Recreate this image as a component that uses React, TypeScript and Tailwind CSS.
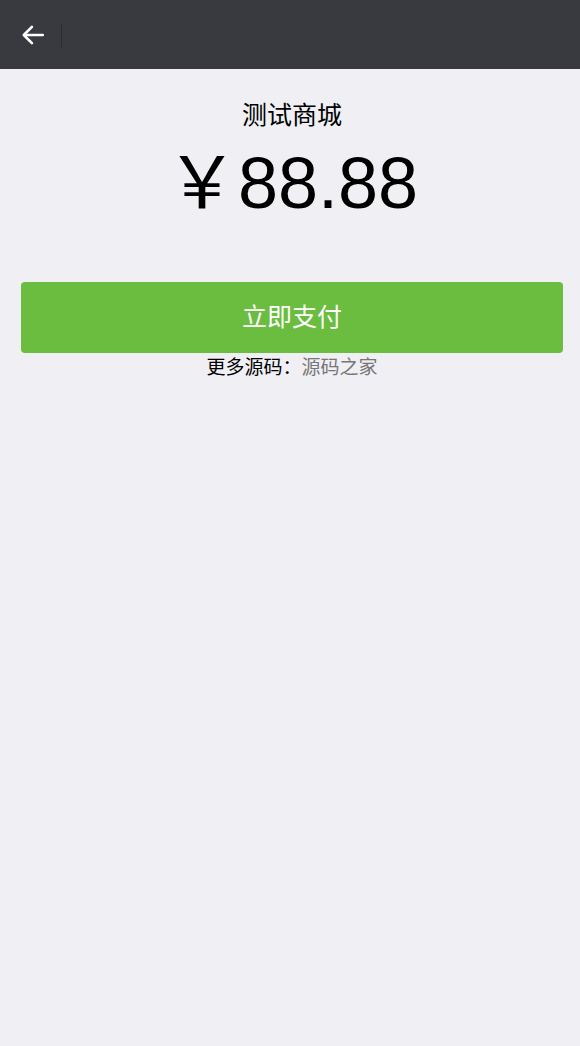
export default function App() {
  return (
    <div
      className="min-h-[1046px] w-full bg-[#efeff4]"
      style={{ fontFamily: '"Liberation Sans", "Noto Sans CJK SC", sans-serif' }}
    >
      <div className="flex h-[69px] items-center bg-[#393a3f] pl-[20px]">
        <svg width="26" height="26" viewBox="0 0 24 24" fill="none" stroke="white" strokeWidth="2.4" strokeLinecap="round" strokeLinejoin="round">
          <path d="M21 12H4" />
          <path d="M11 4.5L3.5 12L11 19.5" />
        </svg>
        <div className="ml-[15px] h-[24px] w-px bg-[#2b2c30]" />
      </div>

      <div className="pl-[4px]">
        <div className="flex flex-col items-center pt-[30px]">
          <h1 className="text-[25px] leading-[32px] text-black">测试商城</h1>
          <div className="mt-[12px] text-[72px] leading-[80px] text-black">
            ￥88.88
          </div>
        </div>

        <div className="mt-[59px] px-[17px]">
          <button className="flex h-[71px] w-full items-center justify-center rounded-[4px] bg-[#6abd3e] text-[25px] text-white">
            立即支付
          </button>
          <p className="mt-[1px] text-center text-[19px] leading-[28px]">
            <span className="text-black">更多源码：</span>
            <span className="text-[#777]">源码之家</span>
          </p>
        </div>
      </div>
    </div>
  );
}
